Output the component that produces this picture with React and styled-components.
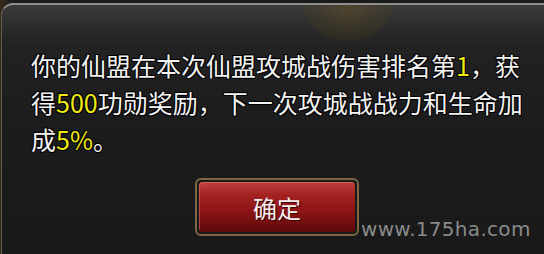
import React from "react";
import styled, { createGlobalStyle } from "styled-components";

const GlobalStyle = createGlobalStyle`
  html, body {
    margin: 0;
    padding: 0;
    background: #1a1a1a;
  }
  body {
    width: 544px;
    height: 254px;
    overflow: hidden;
  }
`;

function App() {
  return (
    <>
      <GlobalStyle />
      <Screen>
        <Panel>
          <Glow />
          <Message>
            你的仙盟在本次仙盟攻城战伤害排名第<Num>1</Num>，获得<Num>500</Num>
            功勋奖励，下一次攻城战战力和生命加成<Num>5%</Num>。
          </Message>
          <ButtonRow>
            <ButtonFrame>
              <ConfirmButton>确定</ConfirmButton>
            </ButtonFrame>
          </ButtonRow>
          <Watermark>www.175ha.com</Watermark>
        </Panel>
      </Screen>
    </>
  );
}

const Screen = styled.div`
  width: 544px;
  height: 254px;
  padding-top: 3px;
  box-sizing: border-box;
  background: linear-gradient(90deg, #3a2a18 0, #1a1a1a 14px);
`;

const Panel = styled.div`
  position: relative;
  height: 251px;
  margin-left: 1px;
  box-sizing: border-box;
  border-top: 2px solid #8e8e8e;
  border-left: 1px solid #5a5a5a;
  border-top-left-radius: 12px;
  background: linear-gradient(
    180deg,
    #3a3a3a 0,
    #2c2c2c 22px,
    #222 40px,
    #1c1c1c 120px,
    #191919 100%
  );
  padding: 42px 0 0 29px;
  overflow: hidden;
`;

/* faint gold ingot shape behind the dialog top */
const Glow = styled.div`
  position: absolute;
  left: 300px;
  top: -8px;
  width: 92px;
  height: 44px;
  border-radius: 0 0 46px 46px;
  background: radial-gradient(
    ellipse at 50% 30%,
    rgba(120, 90, 30, 0.35) 0,
    rgba(90, 70, 25, 0.22) 50%,
    rgba(60, 50, 20, 0) 100%
  );
  pointer-events: none;
`;

const Message = styled.p`
  position: relative;
  margin: 0;
  width: 500px;
  font-family: "Noto Sans CJK SC", "Liberation Sans", sans-serif;
  font-size: 25px;
  line-height: 37px;
  color: #f4f4f4;
  text-shadow: 1px 1px 0 #000, -1px -1px 0 #000, 1px -1px 0 #000,
    -1px 1px 0 #000;
`;

const Num = styled.span`
  color: #f2ea0c;
`;

const ButtonRow = styled.div`
  display: flex;
  padding-left: 164px;
  margin-top: 20px;
`;

const ButtonFrame = styled.div`
  width: 164px;
  height: 58px;
  box-sizing: border-box;
  padding: 2px;
  border: 2px solid #7c6644;
  border-radius: 6px;
  background: #1c1a17;
`;

const ConfirmButton = styled.button`
  width: 100%;
  height: 100%;
  border: none;
  border-radius: 4px;
  background: linear-gradient(
    180deg,
    #c04040 0,
    #a52222 25%,
    #8a1414 60%,
    #5e0a0a 100%
  );
  box-shadow: inset 1px 1px 0 rgba(255, 140, 140, 0.4);
  font-family: "Noto Sans CJK SC", sans-serif;
  font-size: 24px;
  color: #f6f0f0;
  text-shadow: 1px 1px 0 #3a0000;
  padding: 0;
  cursor: pointer;
`;

const Watermark = styled.div`
  position: absolute;
  left: 359px;
  top: 212px;
  font-family: "DejaVu Sans", "Liberation Sans", sans-serif;
  font-size: 20px;
  color: #8a8a8a;
  letter-spacing: 0.3px;
`;

export default App;
